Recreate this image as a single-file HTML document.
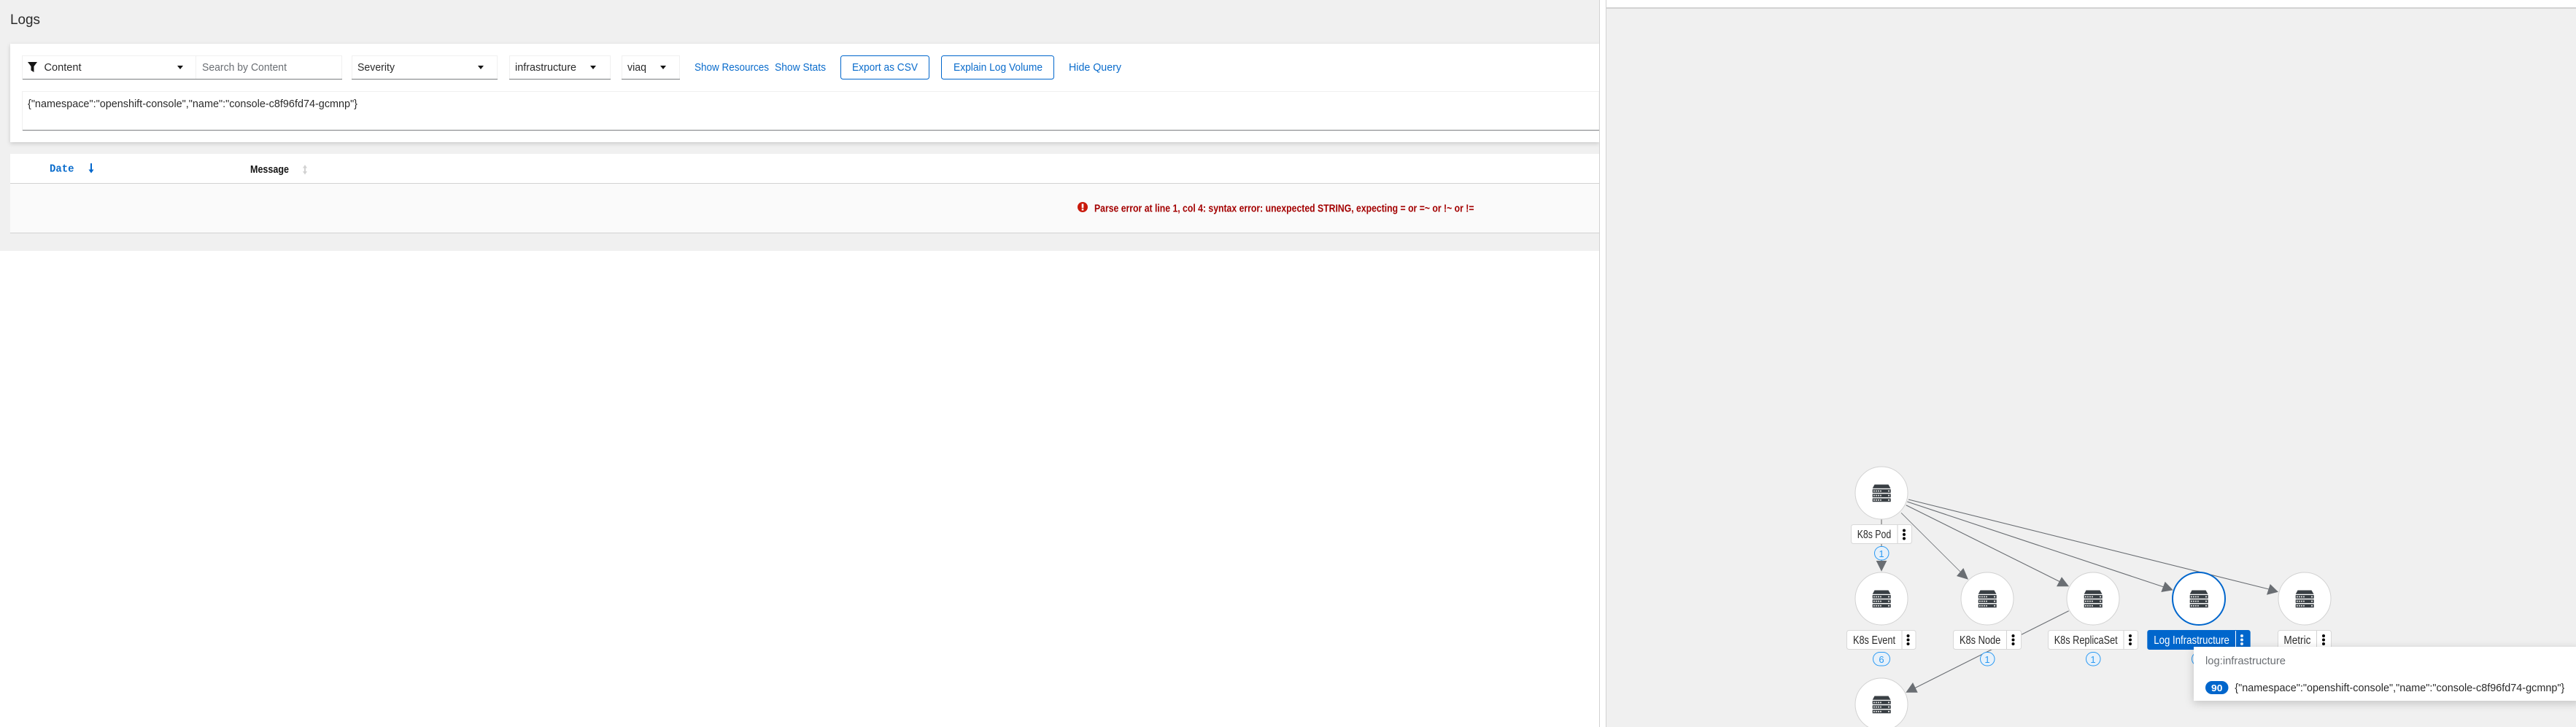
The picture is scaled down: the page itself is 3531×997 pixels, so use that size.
<!DOCTYPE html>
<html lang="en">
<head>
<meta charset="utf-8">
<title>Logs</title>
<style>
html,body{margin:0;padding:0;width:3531px;height:997px;overflow:hidden;background:#fff}
svg{display:block;position:absolute;left:0;top:0}
text{font-family:"Liberation Sans",sans-serif;font-size:15px;fill:#2a2a2a}
.blue{fill:#0a6ccc}
.mono{font-family:"Liberation Mono",monospace;font-weight:700}
.b{font-weight:700}
.lbl{font-size:16px;fill:#2a2a2a}
.lr{fill:#fff;stroke:#d8d8d8;stroke-width:1}
.e{stroke:#6a6e73;fill:none}
.h{fill:#6a6e73}
.n{fill:#fff;stroke:#d2d2d2;stroke-width:1}
.bd{fill:#e7f1fa;stroke:#2b9af3;stroke-width:1}
.bt{font-size:13px;fill:#2b9af3;text-anchor:middle}
.shadow{filter:drop-shadow(0 2px 3px rgba(3,3,3,.16))}
.shadow2{filter:drop-shadow(0 3px 6px rgba(3,3,3,.2))}
</style>
</head>
<body>
<svg width="3531" height="997" viewBox="0 0 3531 997" xmlns="http://www.w3.org/2000/svg">
<defs>
<g id="srv">
<path d="M-9.5 -11.5H9.5L12.5 -6.2H-12.3Z" fill="#393f44"/>
<g fill="#393f44">
<rect x="-12.3" y="-5" width="25" height="4.8"/>
<rect x="-12.3" y="1.2" width="25" height="4.8"/>
<rect x="-12.3" y="7.4" width="25" height="4.8"/>
</g>
<g fill="#e4e4e4">
<rect x="-11" y="-3.5" width="1.8" height="1.8"/><rect x="-8" y="-3.5" width="1.8" height="1.8"/><rect x="-5" y="-3.5" width="1.8" height="1.8"/><rect x="-2" y="-3.5" width="1.8" height="1.8"/><rect x="9" y="-3.5" width="2" height="1.8"/>
<rect x="-11" y="2.7" width="1.8" height="1.8"/><rect x="-8" y="2.7" width="1.8" height="1.8"/><rect x="-5" y="2.7" width="1.8" height="1.8"/><rect x="-2" y="2.7" width="1.8" height="1.8"/><rect x="9" y="2.7" width="2" height="1.8"/>
<rect x="-11" y="8.9" width="1.8" height="1.8"/><rect x="-8" y="8.9" width="1.8" height="1.8"/><rect x="-5" y="8.9" width="1.8" height="1.8"/><rect x="-2" y="8.9" width="1.8" height="1.8"/><rect x="9" y="8.9" width="2" height="1.8"/>
</g>
</g>
<g id="keb"><circle cx="0" cy="-5.5" r="2"/><circle cx="0" cy="0" r="2"/><circle cx="0" cy="5.5" r="2"/></g>
</defs>

<!-- left panel -->
<rect x="0" y="0" width="2192" height="344" fill="#f0f0f0"/>
<text x="14" y="33" style="font-size:19px" textLength="41" lengthAdjust="spacingAndGlyphs">Logs</text>

<rect class="shadow" x="14" y="60" width="2178" height="135" fill="#fff"/>

<!-- toolbar controls -->
<g fill="#fff" stroke="#f0f0f0" stroke-width="1">
<rect x="30.5" y="76.5" width="238" height="32"/>
<rect x="268.5" y="76.5" width="200" height="32"/>
<rect x="482.5" y="76.5" width="199" height="32"/>
<rect x="698.5" y="76.5" width="138" height="32"/>
<rect x="852.5" y="76.5" width="79" height="32"/>
</g>
<g fill="#8a8d90">
<rect x="31" y="108" width="438" height="1.2"/>
<rect x="482" y="108" width="200" height="1.2"/>
<rect x="698" y="108" width="139" height="1.2"/>
<rect x="852" y="108" width="80" height="1.2"/>
</g>
<path d="M38 85H51L46.5 91V99L42.5 96.5V91Z" fill="#151515"/>
<text x="60.5" y="97" textLength="51" lengthAdjust="spacingAndGlyphs">Content</text>
<path d="M243 90H251L247 95Z" fill="#151515"/>
<text x="277" y="97" textLength="116" lengthAdjust="spacingAndGlyphs" style="fill:#6a6e73">Search by Content</text>
<text x="490" y="97" textLength="51" lengthAdjust="spacingAndGlyphs">Severity</text>
<path d="M655 90H663L659 95Z" fill="#151515"/>
<text x="706" y="97" textLength="84" lengthAdjust="spacingAndGlyphs">infrastructure</text>
<path d="M809 90H817L813 95Z" fill="#151515"/>
<text x="860" y="97" textLength="26" lengthAdjust="spacingAndGlyphs">viaq</text>
<path d="M905 90H913L909 95Z" fill="#151515"/>

<text class="blue" x="952" y="97" textLength="102" lengthAdjust="spacingAndGlyphs">Show Resources</text>
<text class="blue" x="1062" y="97" textLength="70" lengthAdjust="spacingAndGlyphs">Show Stats</text>
<rect x="1152.5" y="76.5" width="121" height="32" rx="3" fill="#fff" stroke="#0066cc" stroke-width="1"/>
<text class="blue" x="1168" y="97" textLength="90" lengthAdjust="spacingAndGlyphs">Export as CSV</text>
<rect x="1290.5" y="76.5" width="154" height="32" rx="3" fill="#fff" stroke="#0066cc" stroke-width="1"/>
<text class="blue" x="1307" y="97" textLength="122" lengthAdjust="spacingAndGlyphs">Explain Log Volume</text>
<text class="blue" x="1465" y="97" textLength="72" lengthAdjust="spacingAndGlyphs">Hide Query</text>

<!-- textarea -->
<rect x="30.5" y="125.5" width="2161.5" height="53" fill="#fff" stroke="#f0f0f0" stroke-width="1"/>
<rect x="31" y="178" width="2161" height="1.2" fill="#8a8d90"/>
<text x="38" y="147" textLength="452" lengthAdjust="spacingAndGlyphs">{"namespace":"openshift-console","name":"console-c8f96fd74-gcmnp"}</text>

<!-- table -->
<rect x="14" y="211" width="2178" height="40" fill="#fff"/>
<rect x="14" y="251" width="2178" height="1" fill="#d2d2d2"/>
<rect x="14" y="252" width="2178" height="67" fill="#fafafa"/>
<rect x="14" y="319" width="2178" height="1" fill="#d2d2d2"/>
<text class="mono blue" x="68" y="235.5" style="font-size:15px" textLength="33.5" lengthAdjust="spacingAndGlyphs">Date</text>
<path d="M125 224V234" stroke="#0066cc" stroke-width="2" fill="none"/>
<path d="M121.5 232.5H128.5L125 237.5Z" fill="#0066cc"/>
<text class="b" x="343" y="237" style="font-size:15px;fill:#151515" textLength="53" lengthAdjust="spacingAndGlyphs">Message</text>
<path d="M418 228V237" stroke="#d2d2d2" stroke-width="2" fill="none"/>
<path d="M415 230.5L418 226L421 230.5ZM415 235L418 239.5L421 235Z" fill="#d2d2d2"/>

<!-- error -->
<circle cx="1484" cy="284" r="7" fill="#c9190b"/>
<rect x="1482.7" y="279.5" width="2.6" height="5.7" fill="#fff"/>
<rect x="1482.7" y="286.2" width="2.6" height="2.4" fill="#fff"/>
<text class="b" x="1500" y="290.5" style="fill:#a30000;font-size:15px" textLength="520.5" lengthAdjust="spacingAndGlyphs">Parse error at line 1, col 4: syntax error: unexpected STRING, expecting = or =~ or !~ or !=</text>

<!-- divider -->
<rect x="2192" y="0" width="1" height="997" fill="#d2d2d2"/>
<rect x="2193" y="0" width="8" height="997" fill="#fff"/>
<rect x="2201" y="0" width="1" height="997" fill="#d2d2d2"/>

<!-- right panel -->
<rect x="2202" y="0" width="1329" height="997" fill="#f0f0f0"/>
<rect x="2202" y="0" width="1329" height="10" fill="#fff"/>
<rect x="2202" y="10" width="1329" height="2" fill="#d2d2d2"/>

<!-- edges -->
<path d="M2579 712V770" stroke="#a8a8a8" stroke-width="2" fill="none"/>
<path class="h" d="M2571.7 769H2586.3L2579 783.7Z"/>
<path class="e" stroke-width="0.8" d="M2606 703.3L2690 787"/>
<path class="h" d="M2698 794.7L2691.3 779L2682 790Z"/>
<path class="e" stroke-width="1.1" d="M2612.7 692.7L2824 798"/>
<path class="h" d="M2836 804.3L2826 791.3L2819 804.3Z"/>
<path class="e" stroke-width="1.1" d="M2614.3 688L2966 805"/>
<path class="h" d="M2978.7 809.3L2967.7 797.7L2962.3 812Z"/>
<path class="e" stroke-width="1.1" d="M2616 685L3110 808"/>
<path class="h" d="M3122.9 811.7L3111.8 801L3107 815.7Z"/>
<path class="e" stroke-width="1.1" d="M2835.7 837.7L2624 944"/>
<path class="h" d="M2612.3 949.7L2622 936L2628.7 949.7Z"/>

<!-- nodes -->
<circle class="n" cx="2579" cy="676" r="36"/>
<circle class="n" cx="2579" cy="821" r="36"/>
<circle class="n" cx="2724" cy="821" r="36"/>
<circle class="n" cx="2869" cy="821" r="36"/>
<circle cx="3014" cy="821" r="36" fill="#fff" stroke="#0066cc" stroke-width="2"/>
<circle class="n" cx="3159" cy="821" r="36"/>
<circle class="n" cx="2579" cy="966" r="36"/>
<use href="#srv" x="2579" y="676"/>
<use href="#srv" x="2579" y="821"/>
<use href="#srv" x="2724" y="821"/>
<use href="#srv" x="2869" y="821"/>
<use href="#srv" x="3014" y="821"/>
<use href="#srv" x="3159" y="821"/>
<use href="#srv" x="2579" y="966"/>

<!-- labels -->
<rect class="lr" x="2537.5" y="719.5" width="83" height="26" rx="3"/>
<rect x="2600.5" y="720" width="1" height="25" fill="#d2d2d2"/>
<text class="lbl" x="2545.7" y="738" textLength="46.5" lengthAdjust="spacingAndGlyphs">K8s Pod</text>
<use href="#keb" x="2610" y="733"/>

<rect class="lr" x="2531.5" y="864.5" width="94.5" height="26" rx="3"/>
<rect x="2606.5" y="865" width="1" height="25" fill="#d2d2d2"/>
<text class="lbl" x="2540" y="883" textLength="58" lengthAdjust="spacingAndGlyphs">K8s Event</text>
<use href="#keb" x="2615.5" y="877.5"/>

<rect class="lr" x="2677.5" y="864.5" width="93" height="26" rx="3"/>
<rect x="2750" y="865" width="1" height="25" fill="#d2d2d2"/>
<text class="lbl" x="2686" y="883" textLength="56.3" lengthAdjust="spacingAndGlyphs">K8s Node</text>
<use href="#keb" x="2759.5" y="877.5"/>

<rect class="lr" x="2807.5" y="864.5" width="123" height="26" rx="3"/>
<rect x="2910.5" y="865" width="1" height="25" fill="#d2d2d2"/>
<text class="lbl" x="2815.7" y="883" textLength="87" lengthAdjust="spacingAndGlyphs">K8s ReplicaSet</text>
<use href="#keb" x="2920" y="877.5"/>

<rect x="2943.3" y="864" width="141.4" height="27" rx="3" fill="#0066cc"/>
<rect x="3064" y="865" width="1" height="25" fill="#fff"/>
<text class="lbl" x="2952.3" y="883" style="fill:#fff" textLength="103.6" lengthAdjust="spacingAndGlyphs">Log Infrastructure</text>
<use href="#keb" x="3073" y="877.5" fill="#fff" opacity=".9"/>

<rect class="lr" x="3122.5" y="864.5" width="73" height="26" rx="3"/>
<rect x="3175" y="865" width="1" height="25" fill="#d2d2d2"/>
<text class="lbl" x="3130.4" y="883" textLength="37" lengthAdjust="spacingAndGlyphs">Metric</text>
<use href="#keb" x="3185" y="877.5"/>

<!-- count badges -->
<rect class="bd" x="2569.5" y="749.5" width="19.5" height="18.5" rx="9.2"/>
<text class="bt" x="2579" y="764">1</text>
<rect class="bd" x="2567.5" y="894.5" width="23" height="18.5" rx="9.2"/>
<text class="bt" x="2579" y="909">6</text>
<rect class="bd" x="2714.5" y="894.5" width="19.5" height="18.5" rx="9.2"/>
<text class="bt" x="2724" y="909">1</text>
<rect class="bd" x="2859.5" y="894.5" width="19.5" height="18.5" rx="9.2"/>
<text class="bt" x="2869" y="909">1</text>
<rect class="bd" x="3004.5" y="894.5" width="19.5" height="18.5" rx="9.2"/>

<!-- tooltip -->
<rect class="shadow2" x="3007" y="887" width="530" height="74" fill="#fff"/>
<text x="3023" y="911" style="fill:#6a6e73" textLength="110" lengthAdjust="spacingAndGlyphs">log:infrastructure</text>
<rect x="3023" y="934" width="31.5" height="18" rx="9" fill="#0066cc"/>
<text class="b" x="3031" y="948" style="fill:#fff;font-size:13px" textLength="15.4" lengthAdjust="spacingAndGlyphs">90</text>
<text x="3063.3" y="948" textLength="452" lengthAdjust="spacingAndGlyphs">{"namespace":"openshift-console","name":"console-c8f96fd74-gcmnp"}</text>
</svg>
</body>
</html>
